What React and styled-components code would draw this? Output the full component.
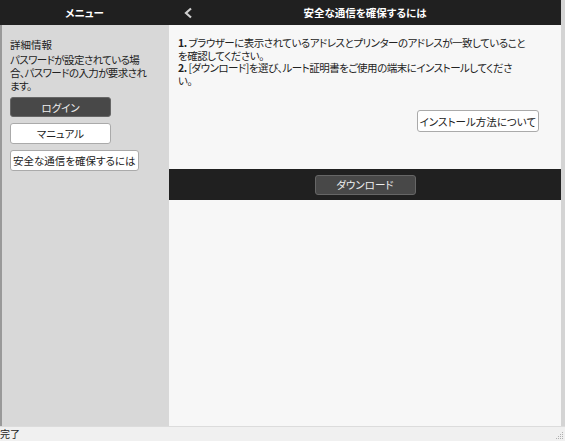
import React from "react";
import styled, { createGlobalStyle } from "styled-components";

const GlobalStyle = createGlobalStyle`
    html, body {
        margin: 0;
        padding: 0;
        background: #f7f7f7;
        overflow: hidden;
    }
    body {
        font-family: "Noto Sans CJK JP", "Liberation Sans", sans-serif;
        font-feature-settings: "palt";
        color: #222;
    }
`;

const Frame = styled.div`
    width: 565px;
    height: 441px;
    display: flex;
    flex-direction: column;
`;

const Body = styled.div`
    flex: 1;
    display: flex;
    min-height: 0;
`;

const Sidebar = styled.div`
    width: 169px;
    display: flex;
    flex-direction: column;
`;

const BarHeader = styled.div`
    height: 25px;
    background: #202020;
    color: #fff;
    font-size: 10.5px;
    font-weight: bold;
    display: flex;
    align-items: center;
    justify-content: center;
    flex-shrink: 0;
`;

const SideBody = styled.div`
    flex: 1;
    background: #d8d8d8;
    border-left: 2px solid #999;
    padding: 13px 10px 0 8px;
    display: flex;
    flex-direction: column;
    align-items: flex-start;
    font-size: 10.5px;
    line-height: 13px;
`;

const Label = styled.div`
    margin-bottom: 2px;
`;

const Note = styled.p`
    margin: 0 0 5px;
    max-width: 140px;
    letter-spacing: -0.6px;
`;

const Button = styled.button`
    font-family: inherit;
    font-feature-settings: "palt";
    font-size: 10.5px;
    line-height: 13px;
    height: ${p => p.h || 21}px;
    width: ${p => (p.w ? p.w + "px" : "auto")};
    padding: 0 2px;
    border-radius: 3px;
    cursor: pointer;
    background: ${p => (p.dark ? "#484848" : "#fff")};
    color: ${p => (p.dark ? "#eee" : "#222")};
    border: 1px solid ${p => (p.dark ? "#666" : "#aaa")};
    margin-bottom: ${p => (p.flush ? 0 : 6)}px;
`;

const Main = styled.div`
    flex: 1;
    display: flex;
    flex-direction: column;
    border-right: 4px solid #d4d4d4;
    background: #f7f7f7;
`;

const MainHeader = styled(BarHeader)`
    display: grid;
    grid-template-columns: 24px 1fr 24px;
    justify-content: stretch;
`;

const Back = styled.div`
    display: flex;
    align-items: center;
    justify-content: flex-end;
`;

const Title = styled.div`
    text-align: center;
`;

const Content = styled.div`
    height: 144px;
    box-sizing: border-box;
    padding: 12px 22px 0 9px;
    display: flex;
    flex-direction: column;
    font-size: 10.5px;
    line-height: 12.5px;
`;

const Step = styled.p`
    margin: 0;
    max-width: 347px;
    letter-spacing: -0.5px;
    b {
        font-weight: bold;
    }
`;

const Right = styled.div`
    display: flex;
    justify-content: flex-end;
    margin-top: 23px;
`;

const ActionBar = styled.div`
    height: 31px;
    background: #202020;
    display: flex;
    align-items: center;
    justify-content: center;
`;

const StatusBar = styled.div`
    height: 14px;
    background: #f0f0f0;
    border-top: 1px solid #dcdcdc;
    font-size: 10px;
    line-height: 14px;
    display: flex;
    justify-content: space-between;
    align-items: flex-end;
    color: #222;
`;

const Grip = styled.svg`
    margin-right: 1px;
    margin-bottom: 1px;
`;

export default function App() {
    return (
        <Frame>
            <GlobalStyle />
            <Body>
                <Sidebar>
                    <BarHeader>メニュー</BarHeader>
                    <SideBody>
                        <Label>詳細情報</Label>
                        <Note>パスワードが設定されている場合、パスワードの入力が要求されます。</Note>
                        <Button dark w={101} h={20}>ログイン</Button>
                        <Button w={101}>マニュアル</Button>
                        <Button>安全な通信を確保するには</Button>
                    </SideBody>
                </Sidebar>
                <Main>
                    <MainHeader>
                        <Back>
                            <svg width="10" height="12" viewBox="0 0 10 12">
                                <polyline points="8,1.5 3,6 8,10.5" fill="none" stroke="#d0d0d0" strokeWidth="2.2" />
                            </svg>
                        </Back>
                        <Title>安全な通信を確保するには</Title>
                        <span />
                    </MainHeader>
                    <Content>
                        <Step><b>1.</b> ブラウザーに表示されているアドレスとプリンターのアドレスが一致していることを確認してください。</Step>
                        <Step><b>2.</b> [ダウンロード]を選び、ルート証明書をご使用の端末にインストールしてください。</Step>
                        <Right>
                            <Button h={22}>インストール方法について</Button>
                        </Right>
                    </Content>
                    <ActionBar>
                        <Button dark flush w={101} h={20}>ダウンロード</Button>
                    </ActionBar>
                </Main>
            </Body>
            <StatusBar>
                <span>完了</span>
                <Grip width="10" height="10" viewBox="0 0 10 10">
                    <g fill="#b0b0b0">
                        <rect x="8" y="2" width="1" height="1" />
                        <rect x="6" y="4" width="1" height="1" />
                        <rect x="8" y="4" width="1" height="1" />
                        <rect x="4" y="6" width="1" height="1" />
                        <rect x="6" y="6" width="1" height="1" />
                        <rect x="8" y="6" width="1" height="1" />
                        <rect x="2" y="8" width="1" height="1" />
                        <rect x="4" y="8" width="1" height="1" />
                        <rect x="6" y="8" width="1" height="1" />
                        <rect x="8" y="8" width="1" height="1" />
                    </g>
                </Grip>
            </StatusBar>
        </Frame>
    );
}
